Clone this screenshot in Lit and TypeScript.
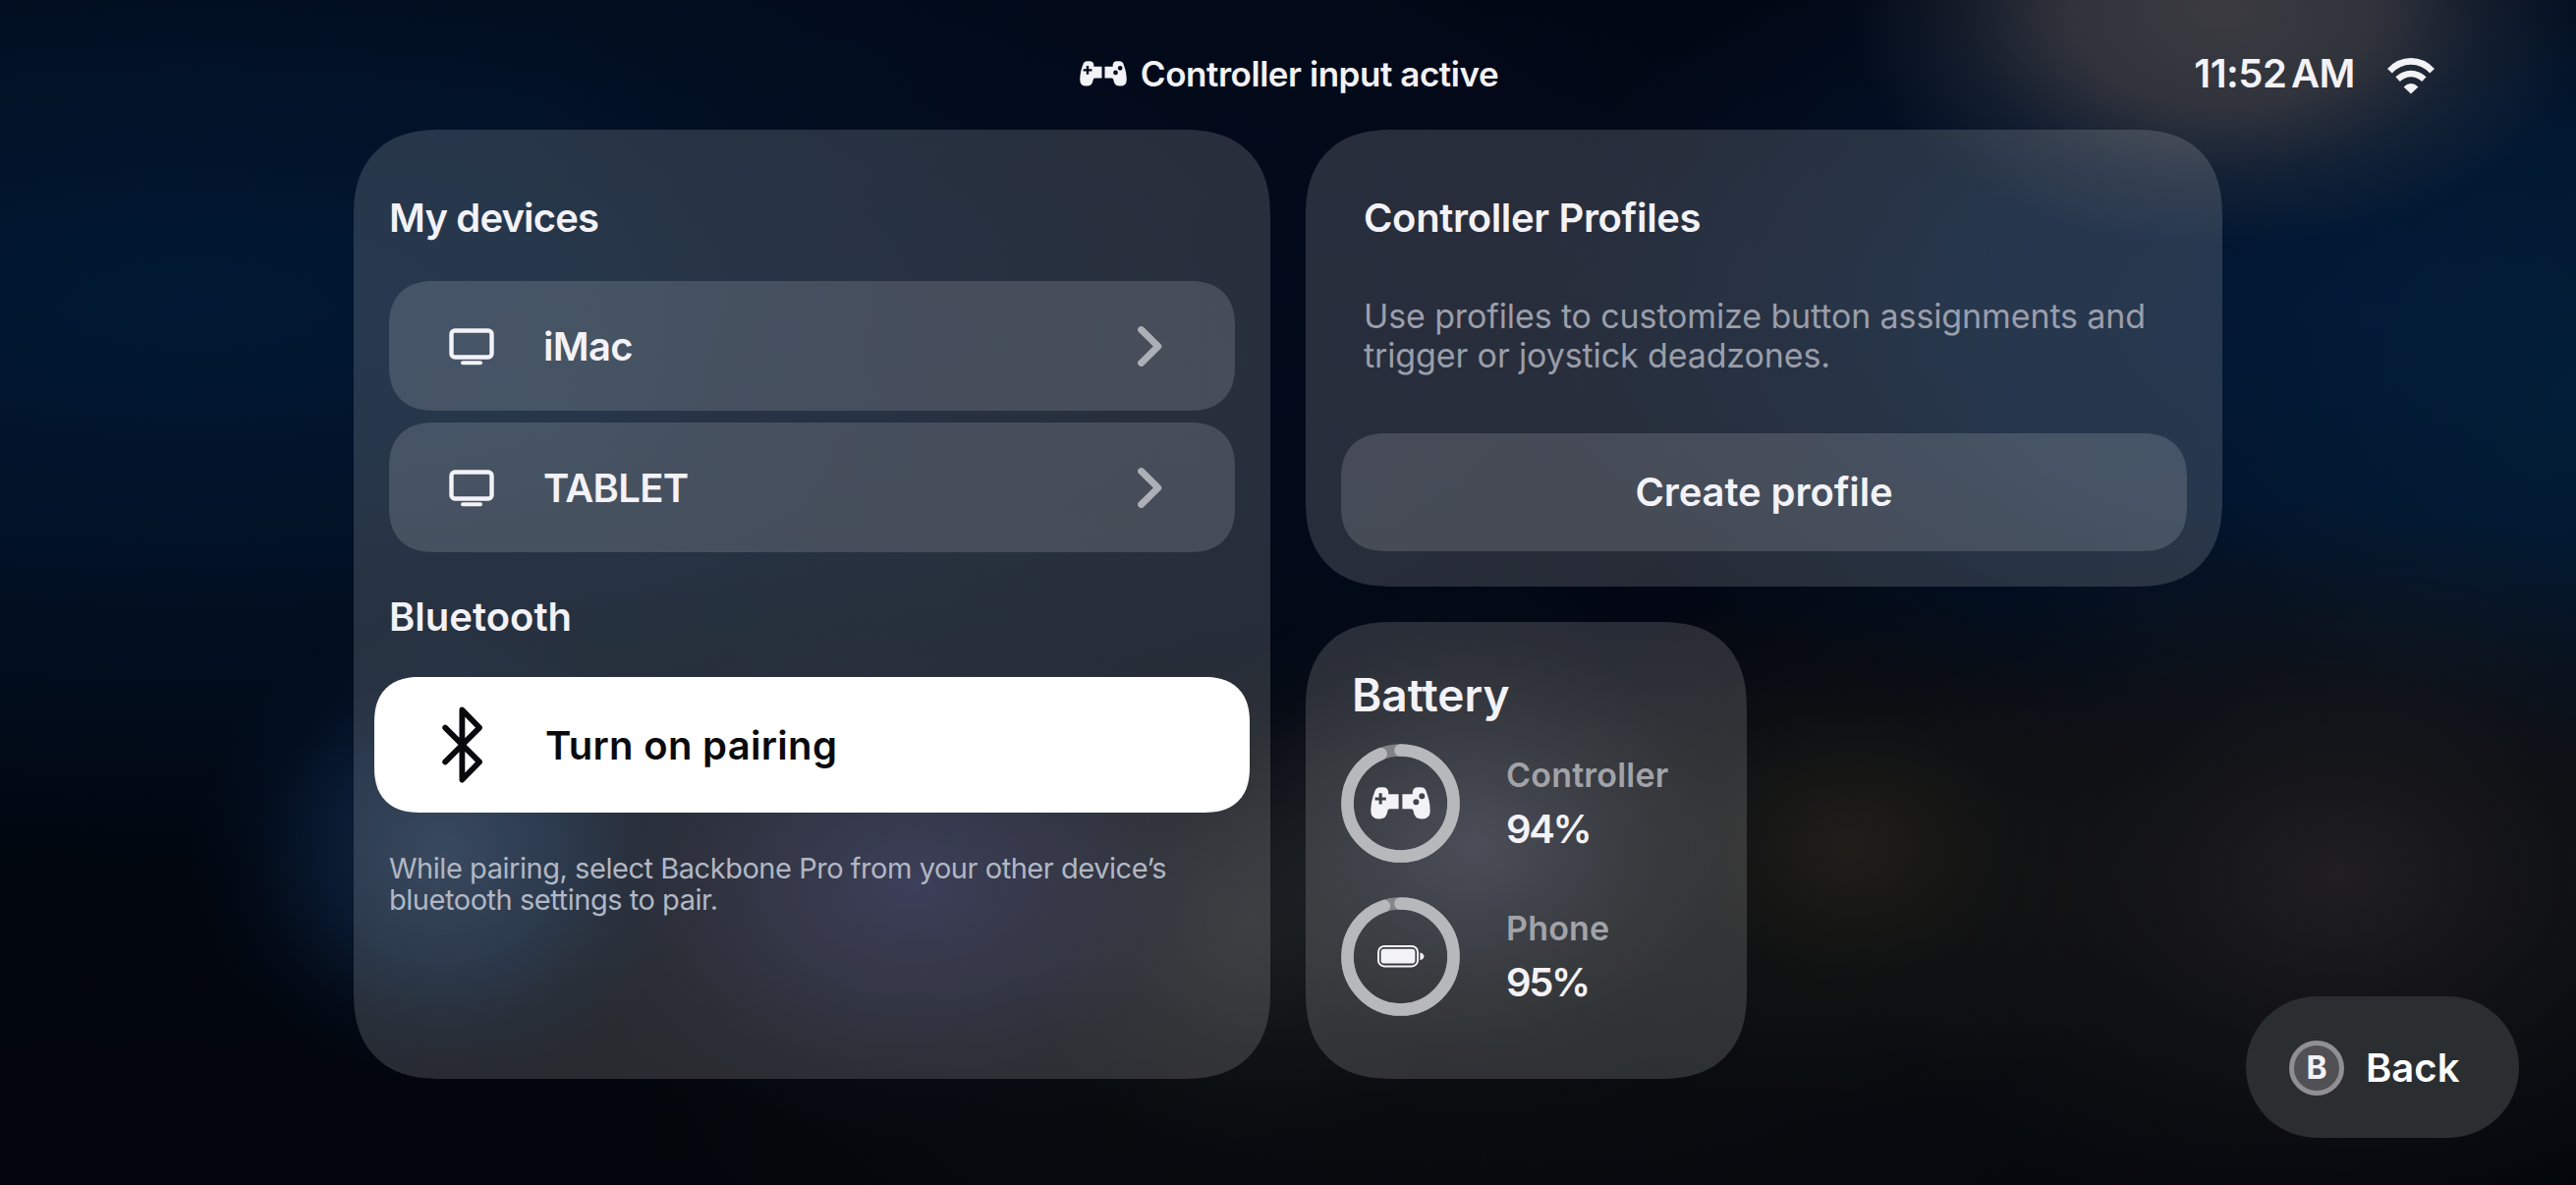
import { LitElement, html, css, svg } from 'lit'
import { customElement, property } from 'lit/decorators.js'

const devices = ['iMac', 'TABLET']

const batteries = [
  { label: 'Controller', level: 94, icon: 'gamepad' },
  { label: 'Phone', level: 95, icon: 'battery' }
]

const icons = {
  gamepad: {
    box: '0 0 61 33',
    body: svg`
      <path fill="currentColor" fill-rule="evenodd" d="M4 5.5Q5 .3 10 .3H13Q17.6 .3 18.2 5V7.3H28.6V22.3H19.5Q17.4 22.3 17.2 25Q16.4 32.5 8.6 32.5Q.2 32.5 .3 24Q.7 13 4 5.5ZM8.6 6.3V10.4H4.6V13.4H8.6V17.6H11.7V13.4H15.8V10.4H11.7V6.3Z"/>
      <path fill="currentColor" fill-rule="evenodd" d="M57 5.5Q56 .3 51 .3H48Q43.4 .3 42.8 5V7.3H32.4V22.3H41.5Q43.6 22.3 43.8 25Q44.6 32.5 52.4 32.5Q60.8 32.5 60.7 24Q60.3 13 57 5.5ZM49.3 9.3a3 3 0 1 0 6 0a3 3 0 1 0 -6 0ZM43.4 15.2a3 3 0 1 0 6 0a3 3 0 1 0 -6 0Z"/>`
  },
  battery: {
    box: '0 0 48 23',
    body: svg`
      <rect x="1" y="1" width="40" height="20.4" rx="6" fill="none" stroke="currentColor" stroke-width="2"/>
      <rect x="3.6" y="3.8" width="34.8" height="14.8" rx="3.4" fill="currentColor"/>
      <path fill="currentColor" d="M43.4 7.4Q47.4 8.4 47.4 11.3T43.4 15.2Z"/>`
  },
  monitor: {
    box: '0 0 46 38',
    body: svg`
      <rect x="2.5" y="2.5" width="41" height="27" rx="3.5" fill="none" stroke="currentColor" stroke-width="4.4"/>
      <path d="M14 35.3H32" fill="none" stroke="currentColor" stroke-width="4" stroke-linecap="round"/>`
  },
  chevron: {
    box: '0 0 25 41',
    body: svg`<path d="M3.6 3.6L20.8 20.5L3.6 37.4" fill="none" stroke="currentColor" stroke-width="7" stroke-linecap="round" stroke-linejoin="round"/>`
  },
  bluetooth: {
    box: '0 0 42 78',
    body: svg`<path d="M3.2 21.6L38 56.4L20.4 74.6V3.4L38 21.6L3.2 56.4" fill="none" stroke="currentColor" stroke-width="5.8" stroke-linecap="round" stroke-linejoin="round"/>`
  },
  wifi: {
    box: '0 0 48 38',
    body: svg`
      <path d="M2.4 14.2Q11.5 4.4 24 4.4T45.6 14.2" fill="none" stroke="currentColor" stroke-width="6.6"/>
      <path d="M10.6 22.6Q16.4 17 24 17T37.4 22.6" fill="none" stroke="currentColor" stroke-width="6.4"/>
      <path fill="currentColor" d="M16.6 30.4Q24 23.6 31.4 30.4L24 37.4Z"/>`
  }
}

@customElement('b-icon')
export class BIcon extends LitElement {
  @property() name = 'gamepad'

  static styles = [
    css`
      :host {
        display: block;
        flex: none;
      }

      svg {
        display: block;
        width: 100%;
        height: 100%;
      }
    `
  ]

  render () {
    const icon = icons[this.name]
    return html`<svg viewBox="${icon.box}" aria-hidden="true">${icon.body}</svg>`
  }
}

@customElement('b-ring')
export class BRing extends LitElement {
  @property({ type: Number }) level = 100

  static styles = [
    css`
      :host {
        display: grid;
        place-items: center;
        width: 121px;
        height: 121px;
        flex: none;
      }

      svg {
        grid-area: 1 / 1;
        width: 121px;
        height: 121px;
        transform: rotate(-90deg);
      }

      circle {
        fill: none;
        stroke-width: 12.6;
      }

      .track {
        stroke: rgba(255, 255, 255, .36);
      }

      .value {
        stroke: #b7b8bb;
        stroke-linecap: round;
      }

      ::slotted(*) {
        grid-area: 1 / 1;
      }
    `
  ]

  render () {
    return html`
      <svg viewBox="0 0 121 121">
        <circle class="track" cx="60.5" cy="60.5" r="54"></circle>
        <circle class="value" cx="60.5" cy="60.5" r="54" pathLength="100" stroke-dasharray="${this.level} 100"></circle>
      </svg>
      <slot></slot>
    `
  }
}

@customElement('app-root')
export class AppRoot extends LitElement {
  static styles = [
    css`
      * {box-sizing: border-box}

      :host {
        display: flex;
        flex-direction: column;
        position: relative;
        width: 2622px;
        height: 1206px;
        overflow: hidden;
        color: #f3f2f7;
        font-family: Inter, "Liberation Sans", sans-serif;
        font-size: 40px;
        font-weight: 600;
        line-height: 40px;
        background:
          radial-gradient(380px 240px at 2260px 10px, rgba(62, 61, 66, .95), rgba(58, 58, 64, .85) 40%, rgba(46, 50, 60, .4) 70%, transparent),
          radial-gradient(260px 240px at 450px 870px, rgba(26, 48, 76, .85), rgba(16, 44, 80, .5) 45%, rgba(8, 32, 66, .18) 75%, transparent),
          radial-gradient(380px 260px at 930px 900px, rgba(30, 33, 66, .9), rgba(26, 29, 58, .5) 45%, rgba(20, 23, 46, .15) 75%, transparent),
          radial-gradient(330px 270px at 1500px 860px, rgba(46, 49, 62, .95), rgba(34, 37, 44, .5) 50%, rgba(24, 26, 32, .15) 78%, transparent),
          radial-gradient(240px 230px at 1270px 940px, rgba(38, 40, 40, .7), rgba(34, 36, 36, .25) 55%, transparent),
          radial-gradient(340px 280px at 1880px 860px, rgba(34, 32, 26, .9), rgba(24, 23, 20, .45) 50%, transparent),
          radial-gradient(520px 380px at 2380px 890px, rgba(33, 31, 33, .95), rgba(24, 23, 24, .6) 50%, transparent),
          radial-gradient(1000px 400px at 1500px 1040px, rgba(14, 17, 17, .8), transparent),
          radial-gradient(400px 400px at 2622px 400px, rgba(3, 32, 58, .8), transparent),
          radial-gradient(850px 480px at 2400px 320px, rgba(2, 24, 54, 1), rgba(2, 23, 50, .85) 45%, transparent),
          radial-gradient(1000px 600px at 1500px 260px, rgba(3, 9, 26, .9), transparent),
          radial-gradient(1700px 580px at 200px 310px, rgba(1, 25, 52, 1), rgba(2, 20, 43, .85) 40%, transparent),
          linear-gradient(#01050f, #01060f 60%, #02050b);
      }

      header {
        display: grid;
        grid-template-columns: 1fr auto 1fr;
        align-items: center;
        height: 132px;
        padding: 18px 144px 0;
      }

      .input-state {
        grid-column: 2;
        display: flex;
        align-items: center;
        gap: 14px;
        padding-left: 2px;
        font-size: 35px;
        letter-spacing: -.45px;
      }

      .input-state b-icon {
        width: 48px;
        height: 26px;
      }

      .clock {
        display: flex;
        justify-content: flex-end;
        align-items: center;
        gap: 33px;
        letter-spacing: -.5px;
        word-spacing: -5px;
      }

      .clock b-icon {
        width: 48px;
        height: 38px;
        margin-top: 3px;
      }

      main {
        display: grid;
        grid-template-columns: 933px 933px;
        gap: 36px;
        padding-left: 360px;
      }

      .column {
        display: flex;
        flex-direction: column;
        align-items: flex-start;
        gap: 36px;
      }

      .card {
        border-radius: 75px;
        background: rgba(255, 255, 255, .15);
        padding: 0 36px;
      }

      h2, p {
        margin: 0;
        font-size: inherit;
        font-weight: inherit;
      }

      .connections {
        height: 966px;
        padding-top: 70px;
      }

      .devices-title {
        letter-spacing: -.85px;
      }

      .rows {
        display: flex;
        flex-direction: column;
        gap: 12px;
        margin: 44px 0 46px;
      }

      .row {
        display: flex;
        align-items: center;
        height: 132px;
        padding: 1px 74px 0 61px;
        border-radius: 40px;
        background: rgba(255, 255, 255, .145);
        letter-spacing: -.7px;
      }

      .row span {
        flex: 1;
        margin-left: 50px;
      }

      .monitor {
        width: 46px;
        height: 38px;
      }

      .chevron {
        width: 25px;
        height: 41px;
        color: #adafb6;
      }

      .pairing {
        display: flex;
        align-items: center;
        height: 138px;
        margin: 41px -21px 0 -15px;
        padding-left: 69px;
        width: 891px;
        border-radius: 40px;
        background: #fff;
        color: #0a0a0c;
        gap: 63px;
        letter-spacing: .3px;
      }

      .pairing span {
        padding-top: 2px;
      }

      .pairing b-icon {
        width: 42px;
        height: 78px;
      }

      .note {
        margin-top: 41px;
        color: #b1b7c4;
        font-size: 29px;
        font-weight: 400;
        line-height: 32px;
        letter-spacing: -.46px;
      }

      .profiles {
        width: 933px;
        height: 465px;
        padding-top: 70px;
      }

      .profiles h2, .profiles p {
        padding-left: 23px;
        letter-spacing: -.35px;
      }

      .profiles p {
        margin: 60px 0 60px;
        color: #9a9eaa;
        font-size: 34px;
        font-weight: 400;
        line-height: 39.5px;
        letter-spacing: -.12px;
      }

      .create {
        display: flex;
        align-items: center;
        justify-content: center;
        height: 120px;
        border-radius: 40px;
        background: rgba(255, 255, 255, .145);
        letter-spacing: -.1px;
      }

      .battery {
        width: 449px;
        height: 465px;
        padding-top: 51px;
      }

      .battery h2 {
        padding-left: 11px;
        margin-bottom: 27px;
        font-size: 46px;
        line-height: 46px;
      }

      .level {
        display: flex;
        gap: 47px;
        height: 121px;
        margin-bottom: 35px;
      }

      .level .gamepad {
        width: 61px;
        height: 33px;
      }

      .level .battery-icon {
        width: 48px;
        height: 23px;
      }

      .reading {
        padding-top: 8px;
        line-height: 61px;
        letter-spacing: -2.4px;
      }

      .reading .label {
        color: #a2a3a8;
        font-size: 34px;
        line-height: 48px;
        letter-spacing: .2px;
      }

      .back {
        position: absolute;
        right: 58px;
        bottom: 48px;
        display: flex;
        align-items: center;
        gap: 22px;
        width: 278px;
        height: 144px;
        padding: 1px 0 0 44px;
        border-radius: 72px;
        background: #2b2e31;
        color: #fff;
      }

      .key {
        display: grid;
        place-items: center;
        width: 56px;
        height: 56px;
        border: 5px solid #909094;
        border-radius: 50%;
        background: #515155;
        color: #f3f2f7;
        font-size: 32px;
        font-weight: 700;
        line-height: 32px;
      }

      @supports (corner-shape: superellipse(1.25)) {
        .card, .row, .pairing, .create {
          corner-shape: superellipse(1.25);
        }

        .card {
          border-radius: 88px;
        }

        .row, .pairing, .create {
          border-radius: 46px;
        }
      }
    `
  ]

  render () {
    return html`
      <header>
        <div class="input-state">
          <b-icon name="gamepad"></b-icon>
          <span>Controller input active</span>
        </div>
        <div class="clock">
          <span>11:52 AM</span>
          <b-icon name="wifi"></b-icon>
        </div>
      </header>
      <main>
        <section class="card connections">
          <h2 class="devices-title">My devices</h2>
          <div class="rows">
            ${devices.map(name => html`
              <div class="row">
                <b-icon class="monitor" name="monitor"></b-icon>
                <span>${name}</span>
                <b-icon class="chevron" name="chevron"></b-icon>
              </div>
            `)}
          </div>
          <h2>Bluetooth</h2>
          <div class="pairing" role="button">
            <b-icon name="bluetooth"></b-icon>
            <span>Turn on pairing</span>
          </div>
          <p class="note">While pairing, select Backbone Pro from your other device’s<br>bluetooth settings to pair.</p>
        </section>
        <div class="column">
          <section class="card profiles">
            <h2>Controller Profiles</h2>
            <p>Use profiles to customize button assignments and<br>trigger or joystick deadzones.</p>
            <div class="create" role="button"><span>Create profile</span></div>
          </section>
          <section class="card battery">
            <h2>Battery</h2>
            ${batteries.map(item => html`
              <div class="level">
                <b-ring level="${item.level}">
                  <b-icon class="${item.icon === 'battery' ? 'battery-icon' : item.icon}" name="${item.icon}"></b-icon>
                </b-ring>
                <div class="reading">
                  <div class="label">${item.label}</div>
                  <div>${item.level}%</div>
                </div>
              </div>
            `)}
          </section>
        </div>
      </main>
      <div class="back" role="button">
        <div class="key">B</div>
        <span>Back</span>
      </div>
    `
  }
}
